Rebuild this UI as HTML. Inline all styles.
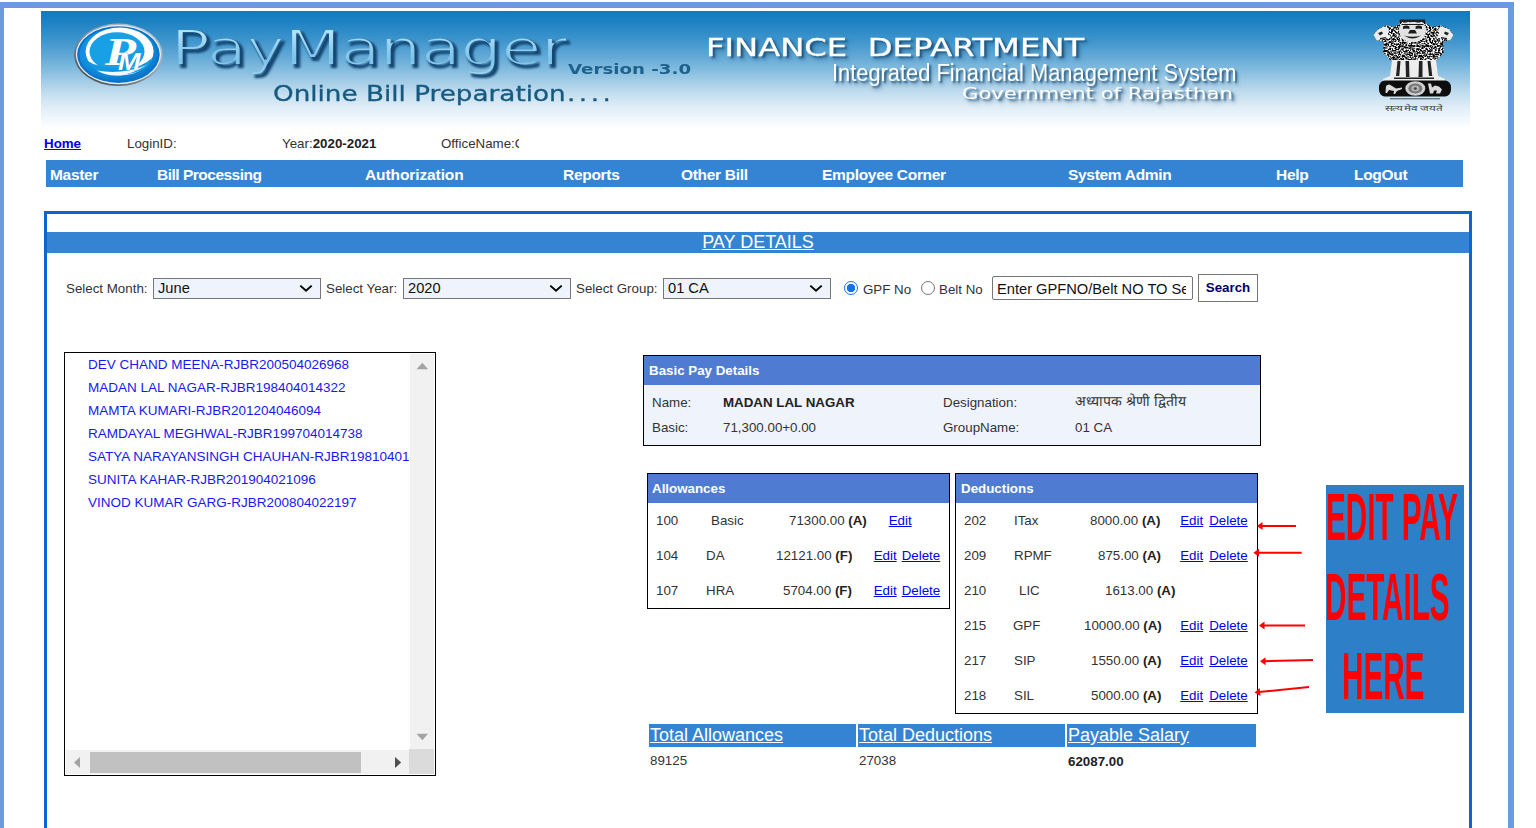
<!DOCTYPE html>
<html lang="en">
<head>
<meta charset="utf-8">
<title>PayManager - Pay Details</title>
<style>
*{box-sizing:border-box;margin:0;padding:0}
html,body{width:1536px;height:828px;overflow:hidden;background:#fff}
body{position:relative;font-family:"Liberation Sans",sans-serif;font-size:13.33px;line-height:15px;color:#333}
.abs,.t{position:absolute;white-space:nowrap}
.frame{position:absolute;background:#6a9bdf}
a{color:#0000ee;text-decoration:underline}
b{font-weight:bold}
/* banner */
#banner{position:absolute;left:41px;top:11px;width:1429px;height:118px;overflow:hidden;
 background:linear-gradient(to bottom,#0f7bbf 0%,#1f83c3 10%,#3f95cc 25%,#66abd7 40%,#84bcdf 50%,#a4cde7 60%,#c3deef 70%,#dcebf6 80%,#eff6fb 90%,#ffffff 100%)}
#banner .t{font-family:"DejaVu Sans","Liberation Sans",sans-serif;transform-origin:0 0}
/* info row */
#info .t{top:136px;font-size:13.33px;line-height:15px}
#ann .t{font-size:66px;line-height:70px;font-weight:bold;color:#f00;transform:scaleX(.449);transform-origin:0 0}
/* nav */
#nav{position:absolute;left:46px;top:160px;width:1417px;height:27px;background:#3584d4}
#nav .t{top:6px;font-weight:bold;font-size:15.5px;line-height:18px;color:#fff;letter-spacing:-0.3px}
/* panel */
#panel{position:absolute;left:44px;top:211px;width:1428px;height:640px;border:3px solid #0b66cf;border-bottom:0;background:#fff}
#title{position:absolute;left:47px;top:232px;width:1422px;height:21px;background:#3584d4;color:#fff;text-align:center;font-size:18px;line-height:21px}
#title span{text-decoration:underline}
.sel{position:absolute;top:278px;height:21px;width:168px}
.sel select{-webkit-appearance:none;appearance:none;display:block;width:168px;height:21px;margin:0;border:1px solid #767676;border-radius:0;outline:0;background:#eef3fc;font-family:"Liberation Sans",sans-serif;font-size:14.67px;line-height:19px;color:#111;padding:0 0 0 4px}
.sel svg{position:absolute;right:8px;top:6px;pointer-events:none}
input.radio{-webkit-appearance:none;appearance:none;position:absolute;top:281px;width:14px;height:14px;margin:0;border-radius:50%;border:1px solid #767676;background:#fff;outline:0}
input.radio:checked{border:1.500px solid #1471f0}
input.radio:checked{background:radial-gradient(circle at 50% 50%,#1471f0 0,#1471f0 3.900px,#fff 4.500px)}
/* tables */
.box{position:absolute;border:1px solid #000;background:#fff}
.box .hd{position:absolute;left:0;top:0;right:0;height:29px;background:#4f7cd2}
.box .hd span{position:absolute;left:5px;top:7px;color:#fff;font-weight:bold;white-space:nowrap}
.tot{position:absolute;top:724px;height:23px;background:#3584d4;color:#fff;font-size:18px;line-height:22px;white-space:nowrap;padding-left:1px}
.tot span{text-decoration:underline}
</style>
</head>
<body>
<!-- outer frame -->
<div class="frame" style="left:0;top:2px;width:1514px;height:6px"></div>
<div class="frame" style="left:0;top:2px;width:4px;height:826px"></div>
<div class="frame" style="left:1508px;top:2px;width:6px;height:826px"></div>

<div id="banner">

  <svg width="0" height="0" style="position:absolute">
    <defs>
      <filter id="pmfx" x="-5%" y="-10%" width="110%" height="125%" color-interpolation-filters="sRGB">
        <feMorphology in="SourceAlpha" operator="erode" radius="1" result="thinA"/>
        <feComposite in="SourceGraphic" in2="thinA" operator="in" result="light"/>
        <feOffset in="SourceAlpha" dx="2.500" dy="2.500" result="off"/>
        <feGaussianBlur in="off" stdDeviation="0.8" result="blur"/>
        <feFlood flood-color="#144672" flood-opacity="1"/>
        <feComposite in2="blur" operator="in" result="shadow"/>
        <feMerge><feMergeNode in="shadow"/><feMergeNode in="light"/></feMerge>
      </filter>
    </defs>
  </svg>
  <!-- logo -->
  <svg class="abs" style="left:25px;top:3px" width="108" height="80" viewBox="66 14 108 80">
    <defs>
      <radialGradient id="lg1" cx="45%" cy="40%" r="65%"><stop offset="0" stop-color="#22aaec"/><stop offset="0.7" stop-color="#0f8fdc"/><stop offset="1" stop-color="#0a6cc4"/></radialGradient>
      <linearGradient id="lg2" x1="1" y1="0" x2="0" y2="1"><stop offset="0" stop-color="#c4d2de"/><stop offset="0.5" stop-color="#8e979f"/><stop offset="1" stop-color="#3c3c3c"/></linearGradient>
    </defs>
    <ellipse cx="118.400" cy="54.8" rx="44.300" ry="31.2" fill="url(#lg2)"/>
    <ellipse cx="118.400" cy="54.6" rx="42.600" ry="29.6" fill="#e6f1fa"/>
    <ellipse cx="118.400" cy="54.6" rx="41.300" ry="28.4" fill="#0a74cc"/>
    <ellipse cx="118.400" cy="54.6" rx="39" ry="26.500" fill="url(#lg1)"/>
    <ellipse cx="119.600" cy="51.6" rx="34" ry="24" fill="#ffffff"/>
    <ellipse cx="117" cy="51.6" rx="27.500" ry="19.3" fill="#17a0e6"/>
    <path d="M86 60 Q98 78 128 74 Q150 70 152 58 Q140 70 118 68 Q98 68 86 60 Z" fill="#1597e0"/>
    <path d="M97 70.500 Q118 83 147 65 Q122 75 97 70.500 Z" fill="#f2faff"/>
    <text transform="translate(105 65) scale(1.3 1)" font-family="'Liberation Serif',serif" font-style="italic" font-weight="bold" font-size="39" fill="#fff">P</text>
    <text transform="translate(118 69.500) scale(1.15 1)" font-family="'Liberation Sans',sans-serif" font-style="italic" font-weight="bold" font-size="23.5" fill="#fff" stroke="#0b78cf" stroke-width="0.5" paint-order="stroke">M</text>
  </svg>
  <span class="t" id="pm" style="left:130px;top:7px;font-size:50px;line-height:60px;color:transparent;background:linear-gradient(to bottom,#9ad4f1 0%,#b4e2f8 25%,#8fcdee 50%,#7cc3ea 70%,#a5daf4 100%);-webkit-background-clip:text;background-clip:text;filter:url(#pmfx);transform:scaleX(1.291)">PayManager</span>
  <span class="t" style="left:232px;top:70px;font-size:21px;line-height:26px;color:#175a80;-webkit-text-stroke:0.3px #175a80;transform:scaleX(1.249)">Online Bill Preparation<span style="letter-spacing:2.850px;margin-left:1px">....</span></span>
  <span class="t" style="left:527px;top:49px;font-size:14.500px;line-height:18px;font-weight:bold;color:#1d628c;transform:scaleX(1.255)">Version -3.0</span>
  <span class="t" style="left:665px;top:22px;font-size:24.700px;line-height:30px;color:#fff;-webkit-text-stroke:0.3px #fff;text-shadow:2px 2px 2px rgba(20,70,110,.85),3px 4px 4px rgba(20,70,110,.35);white-space:pre;transform:scaleX(1.306)">FINANCE  DEPARTMENT</span>
  <span class="t" style="left:791px;top:48px;font-family:'Liberation Sans',sans-serif;font-size:23px;line-height:28px;color:#fff;text-shadow:2px 2px 2px rgba(20,70,110,.8),3px 4px 4px rgba(20,70,110,.35);transform:scaleX(.95)">Integrated Financial Management System</span>
  <span class="t" style="left:921px;top:72.500px;font-size:16px;line-height:19px;color:#fff;text-shadow:2px 2px 2px rgba(20,70,110,.8),3px 4px 4px rgba(20,70,110,.35);transform:scaleX(1.322)">Government of Rajasthan</span>
  <!-- emblem -->
  <svg class="abs" style="left:1325px;top:3px" width="96" height="102" viewBox="0 0 96 102">
    <defs>
      <filter id="tex" x="0" y="0" width="100%" height="100%" color-interpolation-filters="sRGB">
        <feTurbulence type="fractalNoise" baseFrequency="0.55 0.6" numOctaves="2" seed="7" result="n"/>
        <feColorMatrix in="n" type="matrix" values="4 0 0 0 -1.6  4 0 0 0 -1.6  4 0 0 0 -1.6  0 0 0 0 1" result="g"/>
        <feComposite in="g" in2="SourceGraphic" operator="in"/>
      </filter>
      <filter id="tex2" x="0" y="0" width="100%" height="100%" color-interpolation-filters="sRGB">
        <feTurbulence type="fractalNoise" baseFrequency="0.3 0.2" numOctaves="2" seed="11" result="n"/>
        <feColorMatrix in="n" type="matrix" values="4 0 0 0 -1.1  4 0 0 0 -1.1  4 0 0 0 -1.1  0 0 0 0 1" result="g"/>
        <feComposite in="g" in2="SourceGraphic" operator="in"/>
      </filter>
      <filter id="soft" x="-5%" y="-5%" width="110%" height="110%"><feGaussianBlur stdDeviation="0.45"/></filter>
    </defs>
    <g filter="url(#soft)">
    <!-- lions: textured manes -->
    <g filter="url(#tex)">
      <path d="M7.500 21 L12 15 L20 11.5 L29 13 L34 9 L34 6 L59 6 L59 9 L66 13 L75 11.5 L83 15 L87.500 21 L84 26 L77 28 L78 38 L71 46 L62 48 L32 48 L24 46 L17 38 L18 28 L11 26 Z"/>
    </g>
    <path d="M34 5.500 L59 5.500 L59.500 8 L33.500 8 Z" fill="#222"/>
    <!-- faces -->
    <path d="M7.500 21 L12 15.500 L19 12.500 L23 15 L22 20 L25 24 L18 24.500 L11 26.500 Z" fill="#ececec"/>
    <path d="M87.500 21 L83 15.500 L76 12.500 L72 15 L73 20 L70 24 L77 24.500 L84 26.500 Z" fill="#ececec"/>
    <path d="M12 19 l4 -1.500 l1 2 l-3 2 Z M83 19 l-4 -1.500 l-1 2 l3 2 Z M14 24 l6 -1 l0 1.200 l-6 1 Z M81 24 l-6 -1 l0 1.200 l6 1 Z" fill="#222"/>
    <path d="M35.500 8.500 L57.500 8.500 L60.500 16 L58 24 L51 28 L42 28 L35 24 L32.500 16 Z" fill="#e2e2e2"/>
    <path d="M37 12.500 q3.200 -2 6.400 0 l0 2.600 q-3.200 -1.400 -6.400 0 Z M49.600 12.500 q3.200 -2 6.400 0 l0 2.600 q-3.200 -1.400 -6.400 0 Z M44 16 l5 0 l2 3.500 l-9 0 Z M38 21.500 q8.500 6 17 0 q-8.500 2.600 -17 0 Z M35.500 10 l22 0 l0 1 l-22 0 Z" fill="#1c1c1c"/>
    <!-- legs -->
    <path d="M26 46 L70 46 L72 62 L79 65 L79 67 L17 67 L17 65 L24 62 Z" fill="#ededed"/>
    <path d="M31.500 47 l3 0 l-1.200 15 l-3.300 0 Z M39.500 47 l3.500 0 l0.500 16 l-3.500 0 Z M53 47 l3.500 0 l0 16 l-4 0 Z M61.500 47 l3 0 l1.800 15 l-3.300 0 Z M28 63.500 l40 0 l0 1.500 l-40 0 Z" fill="#222"/>
    <!-- abacus -->
    <rect x="13" y="66.500" width="72" height="16" rx="6" ry="6.500" fill="#0e0e0e"/>
    <ellipse cx="49.300" cy="74.5" rx="10" ry="7.300" fill="#cfcfcf"/>
    <ellipse cx="49.300" cy="74.5" rx="7" ry="5" fill="#777"/>
    <ellipse cx="49.300" cy="74.5" rx="4" ry="2.900" fill="#b5b5b5"/>
    <ellipse cx="49.300" cy="74.5" rx="1.600" ry="1.200" fill="#444"/>
    <path d="M20 72 q3 -3 6 0 l4 2.500 l6 -1 l0 1.500 l-5 2 l-2 3 l-1.500 0 l0.500 -3 l-5 -1 l-2 3 l-1.500 0 Z" fill="#d9d9d9"/>
    <path d="M62 69.500 l3 0 l1 4 l3 -2 l4 1 l3 3 l-2 4 l-4 0 l1 -3 l-3 0 l-1 3 l-3 0 Z" fill="#d9d9d9"/>
    <rect x="24" y="84" width="50" height="1.400" fill="#6f7b85"/>
    </g>
    <text x="18.500" y="96.800" font-family="'Liberation Sans',sans-serif" font-size="8" fill="#444" textLength="59" lengthAdjust="spacingAndGlyphs">सत्यमेव जयते</text>
  </svg>

</div>

<div id="info">
  <a class="t" href="#" style="left:44px;font-weight:bold">Home</a>
  <span class="t" style="left:127px">LoginID:</span>
  <span class="t" style="left:282px">Year:<b style="color:#222">2020-2021</b></span>
  <span class="t" style="left:441px;width:78px;overflow:hidden">OfficeName:G</span>
</div>

<div id="nav">
  <span class="t" style="left:4px">Master</span>
  <span class="t" style="left:111px;letter-spacing:-0.5px">Bill Processing</span>
  <span class="t" style="left:319px;letter-spacing:-0.1px">Authorization</span>
  <span class="t" style="left:517px">Reports</span>
  <span class="t" style="left:635px">Other Bill</span>
  <span class="t" style="left:776px">Employee Corner</span>
  <span class="t" style="left:1022px">System Admin</span>
  <span class="t" style="left:1230px">Help</span>
  <span class="t" style="left:1308px">LogOut</span>
</div>

<div id="panel"></div>
<div id="title"><span>PAY DETAILS</span></div>

<!-- filter row -->
<span class="t" style="left:66px;top:281px">Select Month:</span>
<div class="sel" style="left:153px"><select><option selected>June</option></select><svg width="14" height="9" viewBox="0 0 14 9"><path d="M1.3 1.600 L7 6.800 L12.700 1.600" fill="none" stroke="#000" stroke-width="1.900"/></svg></div>
<span class="t" style="left:326px;top:281px">Select Year:</span>
<div class="sel" style="left:403px"><select><option selected>2020</option></select><svg width="14" height="9" viewBox="0 0 14 9"><path d="M1.3 1.600 L7 6.800 L12.700 1.600" fill="none" stroke="#000" stroke-width="1.900"/></svg></div>
<span class="t" style="left:576px;top:281px">Select Group:</span>
<div class="sel" style="left:663px"><select><option selected>01 CA</option></select><svg width="14" height="9" viewBox="0 0 14 9"><path d="M1.3 1.600 L7 6.800 L12.700 1.600" fill="none" stroke="#000" stroke-width="1.900"/></svg></div>
<input class="radio" type="radio" name="srch" checked style="left:844px">
<span class="t" style="left:863px;top:282px">GPF No</span>
<input class="radio" type="radio" name="srch" style="left:921px">
<span class="t" style="left:939px;top:282px">Belt No</span>
<div class="abs" role="textbox" style="left:992px;top:276px;width:201px;height:24px;border:1px solid #767676;border-radius:2px;background:#fff;font-size:14.67px;line-height:24px;color:#111;padding-left:4px;overflow:hidden"><span style="display:block;width:189px;overflow:hidden">Enter GPFNO/Belt NO TO Search</span></div>
<button type="button" style="position:absolute;left:1198px;top:274px;width:60px;height:28px;margin:0;padding:0;border:1px solid #767676;border-radius:0;background:#fff;font-family:'Liberation Sans',sans-serif;font-size:13.33px;font-weight:bold;line-height:26px;color:#000066;text-align:center">Search</button>

<!-- employee list -->
<div id="list" class="abs" style="left:64px;top:352px;width:372px;height:424px;border:1px solid #000;background:#fff;overflow:hidden">
  <div class="abs" style="left:345px;top:1px;width:24px;height:396px;background:#f1f1f1"></div>
  <div class="abs" style="left:1px;top:397px;width:344px;height:24px;background:#f1f1f1"></div>
  <div class="abs" style="left:344px;top:396px;width:25px;height:25px;background:#dcdbdc"></div>
  <div class="abs" style="left:25px;top:399px;width:271px;height:21px;background:#c1c1c1"></div>
  <svg class="abs" style="left:345px;top:1px" width="24" height="396" viewBox="0 0 24 396"><path d="M6.500 15.300 L12.300 8.800 L18.100 15.300 Z" fill="#a3a3a3"/><path d="M6.500 379.800 L18.100 379.800 L12.300 386.300 Z" fill="#a3a3a3"/></svg>
  <svg class="abs" style="left:1px;top:397px" width="344" height="24" viewBox="0 0 344 24"><path d="M14 7 L14 18 L8 12.500 Z" fill="#a3a3a3"/><path d="M329 7 L335.200 12.500 L329 18 Z" fill="#505050"/></svg>
  <div id="items" class="abs" style="left:0;top:0;width:344px;height:398px;overflow:hidden;color:#1818f4;font-size:13.5px">
    <span class="t" style="left:23px;top:4px">DEV CHAND MEENA-RJBR200504026968</span>
    <span class="t" style="left:23px;top:27px">MADAN LAL NAGAR-RJBR198404014322</span>
    <span class="t" style="left:23px;top:50px">MAMTA KUMARI-RJBR201204046094</span>
    <span class="t" style="left:23px;top:73px">RAMDAYAL MEGHWAL-RJBR199704014738</span>
    <span class="t" style="left:23px;top:96px">SATYA NARAYANSINGH CHAUHAN-RJBR19810401</span>
    <span class="t" style="left:23px;top:119px">SUNITA KAHAR-RJBR201904021096</span>
    <span class="t" style="left:23px;top:142px">VINOD KUMAR GARG-RJBR200804022197</span>
  </div>
</div>

<!-- basic pay details -->
<div class="box" style="left:643px;top:355px;width:618px;height:91px;background:#eef3fc">
  <div class="hd"><span>Basic Pay Details</span></div>
  <span class="t" style="left:8px;top:39px">Name:</span>
  <span class="t" style="left:79px;top:39px;font-weight:bold;color:#222">MADAN LAL NAGAR</span>
  <span class="t" style="left:299px;top:39px">Designation:</span>
  <span class="t" style="left:431px;top:38px;font-size:14px;font-family:'Liberation Sans',sans-serif">अध्यापक श्रेणी द्वितीय</span>
  <span class="t" style="left:8px;top:64px">Basic:</span>
  <span class="t" style="left:79px;top:64px">71,300.00+0.00</span>
  <span class="t" style="left:299px;top:64px">GroupName:</span>
  <span class="t" style="left:431px;top:64px">01 CA</span>
</div>
<!-- allowances -->
<div class="box" style="left:647px;top:473px;width:303px;height:136px">
  <div class="hd"><span style="left:4px">Allowances</span></div>
    <span class="t" style="left:8px;top:39px">100</span><span class="t" style="left:63px;top:39px">Basic</span><span class="t" style="left:141px;top:39px">71300.00 <b style="color:#222">(A)</b></span><span class="t" style="left:240.7px;top:39px"><a href="#">Edit</a></span>
    <span class="t" style="left:8px;top:74px">104</span><span class="t" style="left:58px;top:74px">DA</span><span class="t" style="left:128px;top:74px">12121.00 <b style="color:#222">(F)</b></span><span class="t" style="left:225.7px;top:74px"><a href="#">Edit</a></span><span class="t" style="left:253.7px;top:74px"><a href="#">Delete</a></span>
    <span class="t" style="left:8px;top:109px">107</span><span class="t" style="left:58px;top:109px">HRA</span><span class="t" style="left:135px;top:109px">5704.00 <b style="color:#222">(F)</b></span><span class="t" style="left:225.7px;top:109px"><a href="#">Edit</a></span><span class="t" style="left:253.7px;top:109px"><a href="#">Delete</a></span>
</div>
<!-- deductions -->
<div class="box" style="left:955px;top:473px;width:303px;height:241px">
  <div class="hd"><span>Deductions</span></div>
    <span class="t" style="left:8px;top:39px">202</span><span class="t" style="left:58px;top:39px">ITax</span><span class="t" style="left:134px;top:39px">8000.00 <b style="color:#222">(A)</b></span><span class="t" style="left:224.2px;top:39px"><a href="#">Edit</a></span><span class="t" style="left:253.2px;top:39px"><a href="#">Delete</a></span>
    <span class="t" style="left:8px;top:74px">209</span><span class="t" style="left:58px;top:74px">RPMF</span><span class="t" style="left:142px;top:74px">875.00 <b style="color:#222">(A)</b></span><span class="t" style="left:224.2px;top:74px"><a href="#">Edit</a></span><span class="t" style="left:253.2px;top:74px"><a href="#">Delete</a></span>
    <span class="t" style="left:8px;top:109px">210</span><span class="t" style="left:63px;top:109px">LIC</span><span class="t" style="left:149px;top:109px">1613.00 <b style="color:#222">(A)</b></span>
    <span class="t" style="left:8px;top:144px">215</span><span class="t" style="left:57px;top:144px">GPF</span><span class="t" style="left:128px;top:144px">10000.00 <b style="color:#222">(A)</b></span><span class="t" style="left:224.2px;top:144px"><a href="#">Edit</a></span><span class="t" style="left:253.2px;top:144px"><a href="#">Delete</a></span>
    <span class="t" style="left:8px;top:179px">217</span><span class="t" style="left:58px;top:179px">SIP</span><span class="t" style="left:135px;top:179px">1550.00 <b style="color:#222">(A)</b></span><span class="t" style="left:224.2px;top:179px"><a href="#">Edit</a></span><span class="t" style="left:253.2px;top:179px"><a href="#">Delete</a></span>
    <span class="t" style="left:8px;top:214px">218</span><span class="t" style="left:58px;top:214px">SIL</span><span class="t" style="left:135px;top:214px">5000.00 <b style="color:#222">(A)</b></span><span class="t" style="left:224.2px;top:214px"><a href="#">Edit</a></span><span class="t" style="left:253.2px;top:214px"><a href="#">Delete</a></span>
</div>
<!-- totals -->
<div class="tot" style="left:649px;width:207px"><span>Total Allowances</span></div>
<div class="tot" style="left:858px;width:207px"><span>Total Deductions</span></div>
<div class="tot" style="left:1067px;width:189px"><span>Payable Salary</span></div>
<span class="t" style="left:650px;top:753px">89125</span>
<span class="t" style="left:859px;top:753px">27038</span>
<span class="t" style="left:1068px;top:754px;font-weight:bold;color:#222">62087.00</span>

<!-- annotation -->
<div class="abs" style="left:1326px;top:485px;width:138px;height:228px;background:#2d80c8"></div>
<div id="ann">
  <span class="t" style="left:1325.700px;top:482px">EDIT PAY</span>
  <span class="t" style="left:1325.200px;top:561.700px">DETAILS</span>
  <span class="t" style="left:1341.500px;top:641px">HERE</span>
</div>
<svg class="abs" style="left:1250px;top:510px" width="70" height="195" viewBox="1250 510 70 195">
  <g stroke="#f00" stroke-width="2" fill="#f00">
    <line x1="1296" y1="526" x2="1261" y2="526"/><path d="M1257 526 L1262.500 522 L1262.500 530 Z" stroke="none"/>
    <line x1="1301.700" y1="552.7" x2="1257" y2="552.7"/><path d="M1253.400 552.7 L1259 548.700 L1259 556.700 Z" stroke="none"/>
    <line x1="1305" y1="625.500" x2="1263" y2="625.500"/><path d="M1259 625.5 L1264.500 621.5 L1264.500 629.5 Z" stroke="none"/>
    <line x1="1313" y1="660" x2="1264" y2="661.200"/><path d="M1260 661.3 L1265.500 657.2 L1265.600 665.200 Z" stroke="none"/>
    <line x1="1309" y1="687" x2="1259" y2="692"/><path d="M1254.600 692.4 L1259.700 687.900 L1260.500 695.900 Z" stroke="none"/>
  </g>
</svg>

</body>
</html>
